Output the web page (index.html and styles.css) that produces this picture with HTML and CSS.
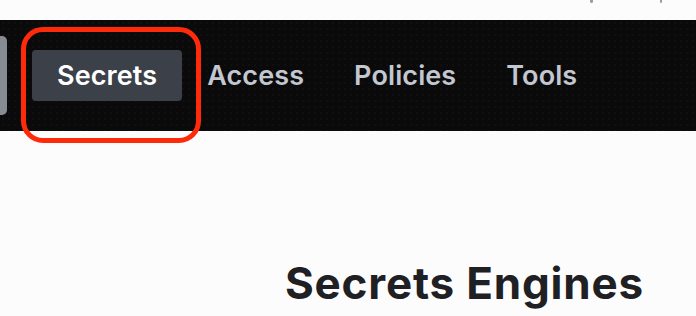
FILE: index.html
```html
<!DOCTYPE html>
<html lang="en">
<head>
<meta charset="utf-8">
<title>Secrets</title>
<link rel="stylesheet" href="styles.css">
</head>
<body>
<div class="topbar">
  <span class="mark mark-a"></span>
  <span class="mark mark-b"></span>
</div>
<nav class="nav">
  <span class="logo-tab"></span>
  <ul class="nav-list">
    <li class="nav-item active">Secrets</li>
    <li class="nav-item">Access</li>
    <li class="nav-item">Policies</li>
    <li class="nav-item">Tools</li>
  </ul>
</nav>
<main class="content">
  <h1 class="title">Secrets Engines</h1>
</main>
<div class="highlight"></div>
</body>
</html>
```
FILE: styles.css
```css
html, body {
  margin: 0;
  padding: 0;
}
body {
  width: 696px;
  height: 316px;
  overflow: hidden;
  background: #fcfcfc;
  font-family: Inter, "Noto Sans", "Liberation Sans", sans-serif;
  position: relative;
}
.topbar {
  height: 20px;
  position: relative;
}
.mark {
  position: absolute;
  top: 0;
  width: 3px;
  height: 3px;
  background: #9a9ca6;
  border-radius: 0 0 2px 2px;
}
.mark-a { left: 590px; }
.mark-b { left: 660px; width: 2px; }
.nav {
  height: 111px;
  background-color: #0a0a0b;
  background-image: radial-gradient(circle, rgba(70, 50, 60, 0.18) 0.6px, transparent 0.9px);
  background-size: 6px 6px;
  display: flex;
  align-items: center;
  gap: 25px;
}
.logo-tab {
  width: 7px;
  height: 79px;
  background: #878b94;
  border-radius: 0 5px 5px 0;
  flex: none;
}
.nav-list {
  list-style: none;
  margin: 0;
  padding: 0;
  display: flex;
  align-items: center;
}
.nav-item {
  height: 51px;
  padding: 0 25px;
  display: flex;
  align-items: center;
  font-size: 27px;
  font-weight: 600;
  color: #c3c7d0;
  border-radius: 4px;
  letter-spacing: 0.1px;
}
.nav-item.active {
  background: #3b4049;
  color: #ffffff;
}
.content {
  padding: 0 0 0 285px;
}
.title {
  margin: 126px 0 0;
  font-size: 44px;
  font-weight: 700;
  color: #1f2024;
  line-height: 52px;
  letter-spacing: 0.8px;
}
.highlight {
  position: absolute;
  left: 21px;
  top: 27px;
  width: 170px;
  height: 106px;
  border: 5px solid #ff2a0a;
  border-radius: 22px;
}
```
